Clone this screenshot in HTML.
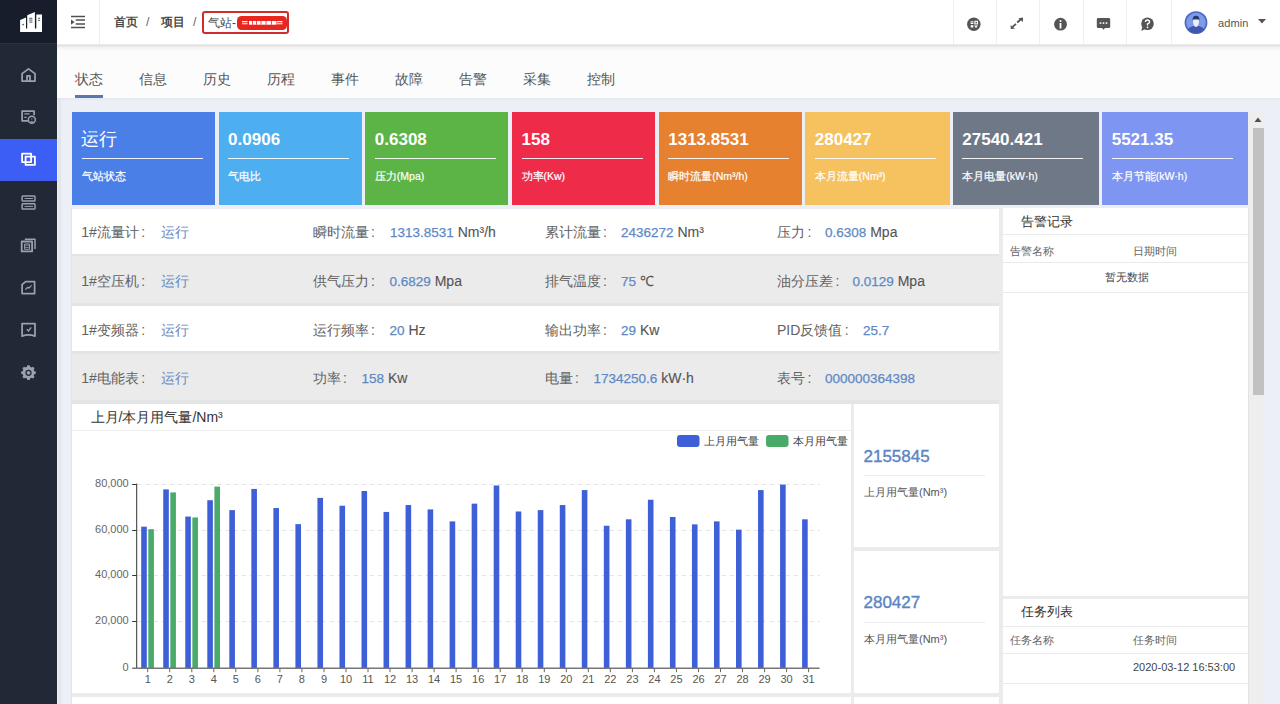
<!DOCTYPE html><html><head><meta charset='utf-8'><style>
*{box-sizing:border-box;margin:0;padding:0}
html,body{width:1280px;height:704px;overflow:hidden;background:#eceff5;font-family:'Liberation Sans',sans-serif;position:relative}
.a{position:absolute;white-space:nowrap}
</style></head><body><div class="a" style="left:0px;top:0px;width:57px;height:704px;background:#212936;"></div>
<div class="a" style="left:0px;top:0px;width:57px;height:43px;background:#171d2b;"></div>
<div class="a" style="left:0px;top:43px;width:57px;height:1px;background:#2b3342;"></div>
<div class="a" style="left:0px;top:138.5px;width:57px;height:42.5px;background:#3d5ef4;"></div>
<svg class="a" style="left:18px;top:10px" width="26" height="24" viewBox="0 0 26 24">
<path d="M2.1 10.1 L8 7.4 L8 22.1 L2.1 22.1 Z M9.2 5.3 L16.9 2.1 L16.9 22.1 L9.2 22.1 Z M18.3 4.4 L24 4.4 L24 22.1 L18.3 22.1 Z M2.1 18.5 L24 18.5 L24 22.1 L2.1 22.1 Z" fill="#fff"/>
<circle cx="5.1" cy="14.6" r="0.8" fill="#3a4150"/><path d="M11.2 8.3 L14.4 8.3 M11.2 10.1 L14.4 10.1 M11.2 12.1 L14.4 12.1" stroke="#3a4150" stroke-width="0.9"/><path d="M20.1 8.3 L22.1 8.3 M20.1 10.3 L22.1 10.3" stroke="#3a4150" stroke-width="0.9"/>
</svg>
<svg class="a" style="left:0;top:0" width="57" height="400" viewBox="0 0 57 400">
<g fill="none" stroke="#9ca1ac" stroke-width="1.75" stroke-linejoin="round">
<path d="M22.1 81 L22.1 73.6 L28.5 68.9 L35 73.6 L35 81 Z"/><path d="M27 81 L27 75.8 L30 75.8 L30 81"/>
<path d="M28.3 120.8 L22.1 120.8 L22.1 111 L34.1 111 L34.1 115.2"/>
<path d="M24.3 113.9 L29.6 113.9 M24.3 117.4 L26.6 117.4" stroke-width="1.4"/>
<circle cx="31.8" cy="119.8" r="3.5" stroke-width="1.5"/>
<path d="M31.8 118.6 L31.8 119.6 M30.3 121.9 L33.3 121.9" stroke-width="1.1"/>
<rect x="22.1" y="153.7" width="9" height="8.4" stroke="#fff" stroke-width="1.8"/>
<rect x="25.6" y="156.6" width="9.3" height="8.3" stroke="#fff" stroke-width="1.8"/>
<rect x="22.1" y="195.9" width="12.9" height="5.2" rx="0.8" stroke-width="1.5"/>
<rect x="22.1" y="203.8" width="12.9" height="5.2" rx="0.8" stroke-width="1.5"/>
<path d="M24.6 198.5 L33 198.5 M24.6 206.4 L33 206.4" stroke-width="1"/>
<path d="M24.8 239.2 L35 239.2 L35 249" stroke-width="1.5"/>
<rect x="21.7" y="241.5" width="10.4" height="9.9" stroke-width="1.8"/>
<rect x="24.6" y="244" width="5" height="5.3" stroke-width="1"/>
<path d="M24.6 245.7 L29.6 245.7 M24.6 247.5 L29.6 247.5" stroke-width="0.7"/>
<path d="M25.6 281.6 L34.6 281.6 L34.6 293.6 L22.1 293.6 L22.1 284.6 Z"/>
<path d="M25.3 289.6 L27.8 287.2 L29 288.2 L31.6 285.4" stroke-width="1.2"/>
<path d="M22.1 323.6 L35 323.6 L35 336.1 Q28.5 333.5 22.1 336.1 Z"/>
<path d="M26.8 329.2 L28.5 331 L31.2 327.4" stroke-width="1.3"/>
</g>
<g transform="translate(28.5 372.8)">
<path d="M-1.3 -7 L1.3 -7 L1.8 -5.2 L3.5 -4.4 L5.1 -5.4 L6.9 -3.6 L5.9 -2 L6.6 -0.3 L8.3 0.2 L8.3 2.6 L6.6 3.1 L5.9 4.8 L6.9 6.4 L5.1 8.2 L3.5 7.2 L1.8 8 L1.3 9.8 L-1.3 9.8 L-1.8 8 L-3.5 7.2 L-5.1 8.2 L-6.9 6.4 L-5.9 4.8 L-6.6 3.1 L-8.3 2.6 L-8.3 0.2 L-6.6 -0.3 L-5.9 -2 L-6.9 -3.6 L-5.1 -5.4 L-3.5 -4.4 L-1.8 -5.2 Z" transform="translate(0 -1.4) scale(0.88)" fill="#9ca1ac"/>
<circle cx="0" cy="0" r="2.5" fill="none" stroke="#212936" stroke-width="1.3"/>
</g>
</svg>
<div class="a" style="left:57px;top:0px;width:1223px;height:44px;background:#fff;"></div>
<div class="a" style="left:99px;top:0px;width:1px;height:44px;background:#eeeeee;"></div>
<svg class="a" style="left:70px;top:15px" width="16" height="14" viewBox="0 0 16 14">
<path d="M1 1.6 L15 1.6 M5.7 5.1 L15 5.1 M5.7 8.9 L15 8.9 M1 12.5 L15 12.5" stroke="#505050" stroke-width="1.5"/><path d="M1 4.5 L4.6 7.1 L1 9.7 Z" fill="#505050"/></svg>
<div class="a" style="left:114px;top:12px;font-size:12px;line-height:20px;color:#333;font-weight:normal;-webkit-text-stroke:0.3px #333">首页</div>
<div class="a" style="left:146px;top:12px;font-size:12.5px;line-height:20px;color:#666;font-weight:normal;">/</div>
<div class="a" style="left:161px;top:12px;font-size:12px;line-height:20px;color:#333;font-weight:normal;-webkit-text-stroke:0.3px #333">项目</div>
<div class="a" style="left:193px;top:12px;font-size:12.5px;line-height:20px;color:#666;font-weight:normal;">/</div>
<div class="a" style="left:202px;top:11px;width:87px;height:23px;background:transparent;border:2px solid #cf2c2c;border-radius:3px"></div>
<div class="a" style="left:208px;top:13px;font-size:12px;line-height:20px;color:#444;font-weight:normal;">气站-</div>
<div class="a" style="left:236.5px;top:16px;width:50.5px;height:14px;background:#e8261e;border-radius:4.5px"></div>
<svg class="a" style="left:236px;top:16px" width="51" height="14" viewBox="0 0 51 14"><path d="M6 5.6 L11.5 5.6 M6 7.8 L11.5 7.8 M41 5.6 L46.5 5.6 M41 7.8 L46.5 7.8" stroke="#fff" stroke-width="1.1"/><path d="M13 5 L40.5 5 L40.5 8.7 L13 8.7 Z" fill="#fff"/><path d="M16.5 5 L16.5 8.7 M20.5 5 L20.5 8.7 M25 5 L25 8.7 M30 5 L30 8.7 M35.5 5 L35.5 8.7" stroke="#e8261e" stroke-width="0.8"/></svg>
<div class="a" style="left:952.5px;top:0px;width:1px;height:44px;background:#efefef;"></div>
<div class="a" style="left:996px;top:0px;width:1px;height:44px;background:#efefef;"></div>
<div class="a" style="left:1039.2px;top:0px;width:1px;height:44px;background:#efefef;"></div>
<div class="a" style="left:1082.5px;top:0px;width:1px;height:44px;background:#efefef;"></div>
<div class="a" style="left:1126.2px;top:0px;width:1px;height:44px;background:#efefef;"></div>
<div class="a" style="left:1170.6px;top:0px;width:1px;height:44px;background:#efefef;"></div>
<svg class="a" style="left:966px;top:16px" width="16" height="16" viewBox="0 0 16 16"><circle cx="7.8" cy="8.3" r="6.7" fill="#555"/><path d="M4.6 5.9 L7.4 5.9 M4.6 7.5 L7.4 7.5" stroke="#fff" stroke-width="1.1"/><rect x="8.9" y="5.3" width="2.6" height="2.6" fill="none" stroke="#fff" stroke-width="1.1"/><rect x="4.7" y="9.2" width="2.6" height="2.3" fill="#fff"/><path d="M8.7 9.2 L10 11.2 L11.3 9.2" fill="none" stroke="#fff" stroke-width="1.1"/></svg>
<svg class="a" style="left:1004px;top:12px" width="26" height="24" viewBox="0 0 26 24"><path d="M13.2 10.5 L16.8 7.2 M8.6 14.9 L12 11.9" stroke="#555" stroke-width="1.9"/><path d="M14.5 6.2 L19 5.5 L18.9 10 Z M6.6 12.9 L6.8 17.1 L11 16.8 Z" fill="#555"/></svg>
<svg class="a" style="left:1053px;top:17px" width="15" height="15" viewBox="0 0 15 15"><circle cx="7.5" cy="7.2" r="6.4" fill="#555"/><circle cx="7.5" cy="4" r="1" fill="#fff"/><path d="M7.5 6 L7.5 11.5" stroke="#fff" stroke-width="1.8"/></svg>
<svg class="a" style="left:1096px;top:17px" width="15" height="15" viewBox="0 0 15 15"><path d="M2.2 1 L12.8 1 Q14.2 1 14.2 2.4 L14.2 9.8 Q14.2 11.1 12.8 11.1 L9 11.1 L7.5 12.8 L6 11.1 L2.2 11.1 Q0.8 11.1 0.8 9.8 L0.8 2.4 Q0.8 1 2.2 1 Z" fill="#555"/><rect x="3.7" y="5.3" width="1.6" height="1.6" fill="#fff"/><rect x="6.7" y="5.3" width="1.6" height="1.6" fill="#fff"/><rect x="9.7" y="5.3" width="1.6" height="1.6" fill="#fff"/></svg>
<svg class="a" style="left:1140px;top:17px" width="15" height="15" viewBox="0 0 15 15"><circle cx="7.5" cy="6.8" r="6.3" fill="#555"/><path d="M2 10 L1.5 14 L5 12 Z" fill="#555"/><path d="M5.5 5 Q5.5 3 7.5 3 Q9.5 3 9.5 5 Q9.5 6.3 7.5 7 L7.5 8.5" fill="none" stroke="#fff" stroke-width="1.4"/><circle cx="7.5" cy="10.3" r="0.9" fill="#fff"/></svg>
<svg class="a" style="left:1183.5px;top:10.5px" width="24" height="24" viewBox="0 0 24 24">
<circle cx="12" cy="11.6" r="11.4" fill="#4d67c2"/><circle cx="12" cy="11.6" r="9.8" fill="#7c9be8"/>
<path d="M3.5 18.5 Q6 15.5 9 15 L15 15 Q18 15.5 20.5 18.5 Q17 22 12 22 Q7 22 3.5 18.5 Z" fill="#3e57b0"/>
<path d="M9 9 Q9 16 12 16 Q15 16 15 9 Z" fill="#e9eefa"/><path d="M8.6 10 Q8.2 4.8 12 4.8 Q15.8 4.8 15.4 10 L14.8 8.2 Q12 7.2 9.2 8.2 Z" fill="#26376a"/></svg>
<div class="a" style="left:1218px;top:13px;font-size:11px;line-height:20px;color:#555;font-weight:normal;letter-spacing:0.1px">admin</div>
<svg class="a" style="left:1258px;top:19px" width="8" height="5" viewBox="0 0 8 5"><path d="M0 0 L8 0 L4 4.5 Z" fill="#555"/></svg>
<div class="a" style="left:57px;top:44px;width:1223px;height:54px;background:#fcfcfc;"></div>
<div class="a" style="left:57px;top:44px;width:1223px;height:7px;background:linear-gradient(#f2f2f2 0px,#e0e0e0 1.5px,#f0f0f0 3px,#f6f6f6 5px,#fcfcfc 7px);"></div>
<div class="a" style="left:74.5px;top:69px;font-size:14px;line-height:20px;color:#555;font-weight:normal;">状态</div>
<div class="a" style="left:138.5px;top:69px;font-size:14px;line-height:20px;color:#555;font-weight:normal;">信息</div>
<div class="a" style="left:202.5px;top:69px;font-size:14px;line-height:20px;color:#555;font-weight:normal;">历史</div>
<div class="a" style="left:266.5px;top:69px;font-size:14px;line-height:20px;color:#555;font-weight:normal;">历程</div>
<div class="a" style="left:330.5px;top:69px;font-size:14px;line-height:20px;color:#555;font-weight:normal;">事件</div>
<div class="a" style="left:394.5px;top:69px;font-size:14px;line-height:20px;color:#555;font-weight:normal;">故障</div>
<div class="a" style="left:458.5px;top:69px;font-size:14px;line-height:20px;color:#555;font-weight:normal;">告警</div>
<div class="a" style="left:522.5px;top:69px;font-size:14px;line-height:20px;color:#555;font-weight:normal;">采集</div>
<div class="a" style="left:586.5px;top:69px;font-size:14px;line-height:20px;color:#555;font-weight:normal;">控制</div>
<div class="a" style="left:75px;top:95px;width:28px;height:2.5px;background:#5877ad;"></div>
<div class="a" style="left:57px;top:98px;width:1223px;height:3px;background:linear-gradient(#e4e7ee,#eceff5);"></div>
<div class="a" style="left:58px;top:98px;width:3px;height:606px;background:#e2e5ec;"></div>
<div class="a" style="left:71px;top:208px;width:1px;height:496px;background:#e4e4e4;"></div>
<div class="a" style="left:72px;top:112px;width:143px;height:92.5px;background:#4a7fe8;"></div>
<div class="a" style="left:81px;top:127.5px;font-size:18px;line-height:22px;color:#fff;font-weight:normal;">运行</div>
<div class="a" style="left:81.5px;top:158px;width:121px;height:1.2px;background:rgba(255,255,255,.9);"></div>
<div class="a" style="left:81.5px;top:165.5px;font-size:10.5px;line-height:20px;color:#fff;font-weight:normal;-webkit-text-stroke:0.2px #fff">气站状态</div>
<div class="a" style="left:218.6px;top:112px;width:143.29999999999998px;height:92.5px;background:#4daff0;"></div>
<div class="a" style="left:228.1px;top:128.8px;font-size:17px;line-height:22px;color:#fff;font-weight:bold;">0.0906</div>
<div class="a" style="left:228.1px;top:158px;width:121px;height:1.2px;background:rgba(255,255,255,.9);"></div>
<div class="a" style="left:228.1px;top:165.5px;font-size:10.5px;line-height:20px;color:#fff;font-weight:normal;-webkit-text-stroke:0.2px #fff">气电比</div>
<div class="a" style="left:365.3px;top:112px;width:143.09999999999997px;height:92.5px;background:#5db446;"></div>
<div class="a" style="left:374.8px;top:128.8px;font-size:17px;line-height:22px;color:#fff;font-weight:bold;">0.6308</div>
<div class="a" style="left:374.8px;top:158px;width:121px;height:1.2px;background:rgba(255,255,255,.9);"></div>
<div class="a" style="left:374.8px;top:165.5px;font-size:10.5px;line-height:20px;color:#fff;font-weight:normal;-webkit-text-stroke:0.2px #fff">压力(Mpa)</div>
<div class="a" style="left:512px;top:112px;width:142.79999999999995px;height:92.5px;background:#ee2c4a;"></div>
<div class="a" style="left:521.5px;top:128.8px;font-size:17px;line-height:22px;color:#fff;font-weight:bold;">158</div>
<div class="a" style="left:521.5px;top:158px;width:121px;height:1.2px;background:rgba(255,255,255,.9);"></div>
<div class="a" style="left:521.5px;top:165.5px;font-size:10.5px;line-height:20px;color:#fff;font-weight:normal;-webkit-text-stroke:0.2px #fff">功率(Kw)</div>
<div class="a" style="left:658.75px;top:112px;width:142.95000000000005px;height:92.5px;background:#e5812f;"></div>
<div class="a" style="left:668.25px;top:128.8px;font-size:17px;line-height:22px;color:#fff;font-weight:bold;">1313.8531</div>
<div class="a" style="left:668.25px;top:158px;width:121px;height:1.2px;background:rgba(255,255,255,.9);"></div>
<div class="a" style="left:668.25px;top:165.5px;font-size:10.5px;line-height:20px;color:#fff;font-weight:normal;-webkit-text-stroke:0.2px #fff">瞬时流量(Nm³/h)</div>
<div class="a" style="left:805.3px;top:112px;width:144.4000000000001px;height:92.5px;background:#f6c15f;"></div>
<div class="a" style="left:814.8px;top:128.8px;font-size:17px;line-height:22px;color:#fff;font-weight:bold;">280427</div>
<div class="a" style="left:814.8px;top:158px;width:121px;height:1.2px;background:rgba(255,255,255,.9);"></div>
<div class="a" style="left:814.8px;top:165.5px;font-size:10.5px;line-height:20px;color:#fff;font-weight:normal;-webkit-text-stroke:0.2px #fff">本月流量(Nm³)</div>
<div class="a" style="left:952.8px;top:112px;width:146.20000000000005px;height:92.5px;background:#6f7886;"></div>
<div class="a" style="left:962.3px;top:128.8px;font-size:17px;line-height:22px;color:#fff;font-weight:bold;">27540.421</div>
<div class="a" style="left:962.3px;top:158px;width:121px;height:1.2px;background:rgba(255,255,255,.9);"></div>
<div class="a" style="left:962.3px;top:165.5px;font-size:10.5px;line-height:20px;color:#fff;font-weight:normal;-webkit-text-stroke:0.2px #fff">本月电量(kW·h)</div>
<div class="a" style="left:1102.2px;top:112px;width:145.79999999999995px;height:92.5px;background:#7e96f1;"></div>
<div class="a" style="left:1111.7px;top:128.8px;font-size:17px;line-height:22px;color:#fff;font-weight:bold;">5521.35</div>
<div class="a" style="left:1111.7px;top:158px;width:121px;height:1.2px;background:rgba(255,255,255,.9);"></div>
<div class="a" style="left:1111.7px;top:165.5px;font-size:10.5px;line-height:20px;color:#fff;font-weight:normal;-webkit-text-stroke:0.2px #fff">本月节能(kW·h)</div>
<div class="a" style="left:72px;top:208.5px;width:927px;height:195.5px;background:#e3e4e6;"></div>
<div class="a" style="left:72px;top:208.5px;width:927px;height:45.5px;background:#fff;"></div>
<div class="a" style="left:81.25px;top:222px;font-size:14px;line-height:20px;color:#626262;font-weight:normal;">1#流量计<span style="margin-left:2.5px">:</span></div>
<div class="a" style="left:161px;top:222px;font-size:14px;line-height:20px;color:#6089c3;font-weight:normal;">运行</div>
<div class="a" style="left:312.5px;top:222px;font-size:14px;line-height:20px;color:#626262;font-weight:normal;">瞬时流量<span style="margin-left:2.5px">:</span></div>
<div class="a" style="left:390px;top:222px;font-size:14px;line-height:20px;color:#444;font-weight:normal;"><span style="color:#6089c3;font-size:13.5px;-webkit-text-stroke:0.25px #6089c3">1313.8531</span> <span style="color:#555;-webkit-text-stroke:0.12px #555">Nm³/h</span></div>
<div class="a" style="left:544.5px;top:222px;font-size:14px;line-height:20px;color:#626262;font-weight:normal;">累计流量<span style="margin-left:2.5px">:</span></div>
<div class="a" style="left:621px;top:222px;font-size:14px;line-height:20px;color:#444;font-weight:normal;"><span style="color:#6089c3;font-size:13.5px;-webkit-text-stroke:0.25px #6089c3">2436272</span> <span style="color:#555;-webkit-text-stroke:0.12px #555">Nm³</span></div>
<div class="a" style="left:777px;top:222px;font-size:14px;line-height:20px;color:#626262;font-weight:normal;">压力<span style="margin-left:2.5px">:</span></div>
<div class="a" style="left:825px;top:222px;font-size:14px;line-height:20px;color:#444;font-weight:normal;"><span style="color:#6089c3;font-size:13.5px;-webkit-text-stroke:0.25px #6089c3">0.6308</span> <span style="color:#555;-webkit-text-stroke:0.12px #555">Mpa</span></div>
<div class="a" style="left:72px;top:256px;width:927px;height:46.5px;background:#ebebeb;"></div>
<div class="a" style="left:81.25px;top:270.8px;font-size:14px;line-height:20px;color:#626262;font-weight:normal;">1#空压机<span style="margin-left:2.5px">:</span></div>
<div class="a" style="left:161px;top:270.8px;font-size:14px;line-height:20px;color:#6089c3;font-weight:normal;">运行</div>
<div class="a" style="left:312.5px;top:270.8px;font-size:14px;line-height:20px;color:#626262;font-weight:normal;">供气压力<span style="margin-left:2.5px">:</span></div>
<div class="a" style="left:389.5px;top:270.8px;font-size:14px;line-height:20px;color:#444;font-weight:normal;"><span style="color:#6089c3;font-size:13.5px;-webkit-text-stroke:0.25px #6089c3">0.6829</span> <span style="color:#555;-webkit-text-stroke:0.12px #555">Mpa</span></div>
<div class="a" style="left:544.5px;top:270.8px;font-size:14px;line-height:20px;color:#626262;font-weight:normal;">排气温度<span style="margin-left:2.5px">:</span></div>
<div class="a" style="left:621px;top:270.8px;font-size:14px;line-height:20px;color:#444;font-weight:normal;"><span style="color:#6089c3;font-size:13.5px;-webkit-text-stroke:0.25px #6089c3">75</span> <span style="color:#555;-webkit-text-stroke:0.12px #555">℃</span></div>
<div class="a" style="left:777px;top:270.8px;font-size:14px;line-height:20px;color:#626262;font-weight:normal;">油分压差<span style="margin-left:2.5px">:</span></div>
<div class="a" style="left:852.5px;top:270.8px;font-size:14px;line-height:20px;color:#444;font-weight:normal;"><span style="color:#6089c3;font-size:13.5px;-webkit-text-stroke:0.25px #6089c3">0.0129</span> <span style="color:#555;-webkit-text-stroke:0.12px #555">Mpa</span></div>
<div class="a" style="left:72px;top:305.5px;width:927px;height:45px;background:#fff;"></div>
<div class="a" style="left:81.25px;top:320px;font-size:14px;line-height:20px;color:#626262;font-weight:normal;">1#变频器<span style="margin-left:2.5px">:</span></div>
<div class="a" style="left:161px;top:320px;font-size:14px;line-height:20px;color:#6089c3;font-weight:normal;">运行</div>
<div class="a" style="left:312.5px;top:320px;font-size:14px;line-height:20px;color:#626262;font-weight:normal;">运行频率<span style="margin-left:2.5px">:</span></div>
<div class="a" style="left:389.5px;top:320px;font-size:14px;line-height:20px;color:#444;font-weight:normal;"><span style="color:#6089c3;font-size:13.5px;-webkit-text-stroke:0.25px #6089c3">20</span> <span style="color:#555;-webkit-text-stroke:0.12px #555">Hz</span></div>
<div class="a" style="left:544.5px;top:320px;font-size:14px;line-height:20px;color:#626262;font-weight:normal;">输出功率<span style="margin-left:2.5px">:</span></div>
<div class="a" style="left:621px;top:320px;font-size:14px;line-height:20px;color:#444;font-weight:normal;"><span style="color:#6089c3;font-size:13.5px;-webkit-text-stroke:0.25px #6089c3">29</span> <span style="color:#555;-webkit-text-stroke:0.12px #555">Kw</span></div>
<div class="a" style="left:777px;top:320px;font-size:14px;line-height:20px;color:#626262;font-weight:normal;">PID反馈值<span style="margin-left:2.5px">:</span></div>
<div class="a" style="left:863px;top:320px;font-size:14px;line-height:20px;color:#444;font-weight:normal;"><span style="color:#6089c3;font-size:13.5px;-webkit-text-stroke:0.25px #6089c3">25.7</span> <span style="color:#555;-webkit-text-stroke:0.12px #555"></span></div>
<div class="a" style="left:72px;top:353.5px;width:927px;height:46.5px;background:#ebebeb;"></div>
<div class="a" style="left:81.25px;top:368.3px;font-size:14px;line-height:20px;color:#626262;font-weight:normal;">1#电能表<span style="margin-left:2.5px">:</span></div>
<div class="a" style="left:161px;top:368.3px;font-size:14px;line-height:20px;color:#6089c3;font-weight:normal;">运行</div>
<div class="a" style="left:312.5px;top:368.3px;font-size:14px;line-height:20px;color:#626262;font-weight:normal;">功率<span style="margin-left:2.5px">:</span></div>
<div class="a" style="left:361.5px;top:368.3px;font-size:14px;line-height:20px;color:#444;font-weight:normal;"><span style="color:#6089c3;font-size:13.5px;-webkit-text-stroke:0.25px #6089c3">158</span> <span style="color:#555;-webkit-text-stroke:0.12px #555">Kw</span></div>
<div class="a" style="left:544.5px;top:368.3px;font-size:14px;line-height:20px;color:#626262;font-weight:normal;">电量<span style="margin-left:2.5px">:</span></div>
<div class="a" style="left:593.5px;top:368.3px;font-size:14px;line-height:20px;color:#444;font-weight:normal;"><span style="color:#6089c3;font-size:13.5px;-webkit-text-stroke:0.25px #6089c3">1734250.6</span> <span style="color:#555;-webkit-text-stroke:0.12px #555">kW·h</span></div>
<div class="a" style="left:777px;top:368.3px;font-size:14px;line-height:20px;color:#626262;font-weight:normal;">表号<span style="margin-left:2.5px">:</span></div>
<div class="a" style="left:825px;top:368.3px;font-size:14px;line-height:20px;color:#444;font-weight:normal;"><span style="color:#6089c3;font-size:13.5px;-webkit-text-stroke:0.25px #6089c3">000000364398</span> <span style="color:#555;-webkit-text-stroke:0.12px #555"></span></div>
<div class="a" style="left:72px;top:404px;width:779px;height:288.5px;background:#fff;"></div>
<div class="a" style="left:90.5px;top:407px;font-size:14px;line-height:20px;color:#333;font-weight:normal;">上月/本月用气量/Nm³</div>
<div class="a" style="left:72px;top:429.5px;width:779px;height:1px;background:#eeeeee;"></div>
<svg class="a" style="left:0;top:0" width="1280" height="704"><path d="M137.7 621.5 L819.6 621.5" stroke="#e3e3e3" stroke-width="1" stroke-dasharray="4 4"/><path d="M137.7 575.5 L819.6 575.5" stroke="#e3e3e3" stroke-width="1" stroke-dasharray="4 4"/><path d="M137.7 530.5 L819.6 530.5" stroke="#e3e3e3" stroke-width="1" stroke-dasharray="4 4"/><path d="M137.7 484.5 L819.6 484.5" stroke="#e3e3e3" stroke-width="1" stroke-dasharray="4 4"/><rect x="141.20" y="526.67" width="5.6" height="141.53" fill="#3f5fd8"/><rect x="163.23" y="489.39" width="5.6" height="178.81" fill="#3f5fd8"/><rect x="185.26" y="516.55" width="5.6" height="151.65" fill="#3f5fd8"/><rect x="207.29" y="500.21" width="5.6" height="167.99" fill="#3f5fd8"/><rect x="229.32" y="510.10" width="5.6" height="158.10" fill="#3f5fd8"/><rect x="251.35" y="488.93" width="5.6" height="179.27" fill="#3f5fd8"/><rect x="273.38" y="508.03" width="5.6" height="160.17" fill="#3f5fd8"/><rect x="295.41" y="524.14" width="5.6" height="144.06" fill="#3f5fd8"/><rect x="317.44" y="497.91" width="5.6" height="170.29" fill="#3f5fd8"/><rect x="339.47" y="505.73" width="5.6" height="162.47" fill="#3f5fd8"/><rect x="361.50" y="491.00" width="5.6" height="177.20" fill="#3f5fd8"/><rect x="383.53" y="511.95" width="5.6" height="156.25" fill="#3f5fd8"/><rect x="405.56" y="505.04" width="5.6" height="163.16" fill="#3f5fd8"/><rect x="427.59" y="509.41" width="5.6" height="158.79" fill="#3f5fd8"/><rect x="449.62" y="521.38" width="5.6" height="146.82" fill="#3f5fd8"/><rect x="471.65" y="503.66" width="5.6" height="164.54" fill="#3f5fd8"/><rect x="493.68" y="485.48" width="5.6" height="182.72" fill="#3f5fd8"/><rect x="515.71" y="511.48" width="5.6" height="156.72" fill="#3f5fd8"/><rect x="537.74" y="510.10" width="5.6" height="158.10" fill="#3f5fd8"/><rect x="559.77" y="505.04" width="5.6" height="163.16" fill="#3f5fd8"/><rect x="581.80" y="490.08" width="5.6" height="178.12" fill="#3f5fd8"/><rect x="603.83" y="525.75" width="5.6" height="142.45" fill="#3f5fd8"/><rect x="625.86" y="519.31" width="5.6" height="148.89" fill="#3f5fd8"/><rect x="647.89" y="499.75" width="5.6" height="168.45" fill="#3f5fd8"/><rect x="669.92" y="517.01" width="5.6" height="151.19" fill="#3f5fd8"/><rect x="691.95" y="524.37" width="5.6" height="143.83" fill="#3f5fd8"/><rect x="713.98" y="521.38" width="5.6" height="146.82" fill="#3f5fd8"/><rect x="736.01" y="529.66" width="5.6" height="138.54" fill="#3f5fd8"/><rect x="758.04" y="490.08" width="5.6" height="178.12" fill="#3f5fd8"/><rect x="780.07" y="484.56" width="5.6" height="183.64" fill="#3f5fd8"/><rect x="802.10" y="519.31" width="5.6" height="148.89" fill="#3f5fd8"/><rect x="148.30" y="529.20" width="5.6" height="139.00" fill="#4aaa6a"/><rect x="170.33" y="492.38" width="5.6" height="175.82" fill="#4aaa6a"/><rect x="192.36" y="517.47" width="5.6" height="150.73" fill="#4aaa6a"/><rect x="214.39" y="486.63" width="5.6" height="181.57" fill="#4aaa6a"/><path d="M136.7 483.6 L136.7 668.2" stroke="#333" stroke-width="1"/><path d="M132.2 668.2 L136.7 668.2" stroke="#333" stroke-width="1"/><text x="128.7" y="670.6" text-anchor="end" font-size="11" fill="#666" font-family="Liberation Sans">0</text><path d="M132.2 621.5 L136.7 621.5" stroke="#333" stroke-width="1"/><text x="128.7" y="623.9" text-anchor="end" font-size="11" fill="#666" font-family="Liberation Sans">20,000</text><path d="M132.2 575.5 L136.7 575.5" stroke="#333" stroke-width="1"/><text x="128.7" y="577.9" text-anchor="end" font-size="11" fill="#666" font-family="Liberation Sans">40,000</text><path d="M132.2 530.5 L136.7 530.5" stroke="#333" stroke-width="1"/><text x="128.7" y="532.9" text-anchor="end" font-size="11" fill="#666" font-family="Liberation Sans">60,000</text><path d="M132.2 484.5 L136.7 484.5" stroke="#333" stroke-width="1"/><text x="128.7" y="486.9" text-anchor="end" font-size="11" fill="#666" font-family="Liberation Sans">80,000</text><path d="M136.7 668.2 L819.6 668.2" stroke="#777" stroke-width="1.5"/><path d="M147.7 668.2 L147.7 672.2" stroke="#666" stroke-width="1"/><text x="147.7" y="683.2" text-anchor="middle" font-size="11" fill="#555" font-family="Liberation Sans">1</text><path d="M169.7 668.2 L169.7 672.2" stroke="#666" stroke-width="1"/><text x="169.7" y="683.2" text-anchor="middle" font-size="11" fill="#555" font-family="Liberation Sans">2</text><path d="M191.8 668.2 L191.8 672.2" stroke="#666" stroke-width="1"/><text x="191.8" y="683.2" text-anchor="middle" font-size="11" fill="#555" font-family="Liberation Sans">3</text><path d="M213.8 668.2 L213.8 672.2" stroke="#666" stroke-width="1"/><text x="213.8" y="683.2" text-anchor="middle" font-size="11" fill="#555" font-family="Liberation Sans">4</text><path d="M235.8 668.2 L235.8 672.2" stroke="#666" stroke-width="1"/><text x="235.8" y="683.2" text-anchor="middle" font-size="11" fill="#555" font-family="Liberation Sans">5</text><path d="M257.9 668.2 L257.9 672.2" stroke="#666" stroke-width="1"/><text x="257.9" y="683.2" text-anchor="middle" font-size="11" fill="#555" font-family="Liberation Sans">6</text><path d="M279.9 668.2 L279.9 672.2" stroke="#666" stroke-width="1"/><text x="279.9" y="683.2" text-anchor="middle" font-size="11" fill="#555" font-family="Liberation Sans">7</text><path d="M301.9 668.2 L301.9 672.2" stroke="#666" stroke-width="1"/><text x="301.9" y="683.2" text-anchor="middle" font-size="11" fill="#555" font-family="Liberation Sans">8</text><path d="M324.0 668.2 L324.0 672.2" stroke="#666" stroke-width="1"/><text x="324.0" y="683.2" text-anchor="middle" font-size="11" fill="#555" font-family="Liberation Sans">9</text><path d="M346.0 668.2 L346.0 672.2" stroke="#666" stroke-width="1"/><text x="346.0" y="683.2" text-anchor="middle" font-size="11" fill="#555" font-family="Liberation Sans">10</text><path d="M368.0 668.2 L368.0 672.2" stroke="#666" stroke-width="1"/><text x="368.0" y="683.2" text-anchor="middle" font-size="11" fill="#555" font-family="Liberation Sans">11</text><path d="M390.0 668.2 L390.0 672.2" stroke="#666" stroke-width="1"/><text x="390.0" y="683.2" text-anchor="middle" font-size="11" fill="#555" font-family="Liberation Sans">12</text><path d="M412.1 668.2 L412.1 672.2" stroke="#666" stroke-width="1"/><text x="412.1" y="683.2" text-anchor="middle" font-size="11" fill="#555" font-family="Liberation Sans">13</text><path d="M434.1 668.2 L434.1 672.2" stroke="#666" stroke-width="1"/><text x="434.1" y="683.2" text-anchor="middle" font-size="11" fill="#555" font-family="Liberation Sans">14</text><path d="M456.1 668.2 L456.1 672.2" stroke="#666" stroke-width="1"/><text x="456.1" y="683.2" text-anchor="middle" font-size="11" fill="#555" font-family="Liberation Sans">15</text><path d="M478.2 668.2 L478.2 672.2" stroke="#666" stroke-width="1"/><text x="478.2" y="683.2" text-anchor="middle" font-size="11" fill="#555" font-family="Liberation Sans">16</text><path d="M500.2 668.2 L500.2 672.2" stroke="#666" stroke-width="1"/><text x="500.2" y="683.2" text-anchor="middle" font-size="11" fill="#555" font-family="Liberation Sans">17</text><path d="M522.2 668.2 L522.2 672.2" stroke="#666" stroke-width="1"/><text x="522.2" y="683.2" text-anchor="middle" font-size="11" fill="#555" font-family="Liberation Sans">18</text><path d="M544.3 668.2 L544.3 672.2" stroke="#666" stroke-width="1"/><text x="544.3" y="683.2" text-anchor="middle" font-size="11" fill="#555" font-family="Liberation Sans">19</text><path d="M566.3 668.2 L566.3 672.2" stroke="#666" stroke-width="1"/><text x="566.3" y="683.2" text-anchor="middle" font-size="11" fill="#555" font-family="Liberation Sans">20</text><path d="M588.3 668.2 L588.3 672.2" stroke="#666" stroke-width="1"/><text x="588.3" y="683.2" text-anchor="middle" font-size="11" fill="#555" font-family="Liberation Sans">21</text><path d="M610.3 668.2 L610.3 672.2" stroke="#666" stroke-width="1"/><text x="610.3" y="683.2" text-anchor="middle" font-size="11" fill="#555" font-family="Liberation Sans">22</text><path d="M632.4 668.2 L632.4 672.2" stroke="#666" stroke-width="1"/><text x="632.4" y="683.2" text-anchor="middle" font-size="11" fill="#555" font-family="Liberation Sans">23</text><path d="M654.4 668.2 L654.4 672.2" stroke="#666" stroke-width="1"/><text x="654.4" y="683.2" text-anchor="middle" font-size="11" fill="#555" font-family="Liberation Sans">24</text><path d="M676.4 668.2 L676.4 672.2" stroke="#666" stroke-width="1"/><text x="676.4" y="683.2" text-anchor="middle" font-size="11" fill="#555" font-family="Liberation Sans">25</text><path d="M698.5 668.2 L698.5 672.2" stroke="#666" stroke-width="1"/><text x="698.5" y="683.2" text-anchor="middle" font-size="11" fill="#555" font-family="Liberation Sans">26</text><path d="M720.5 668.2 L720.5 672.2" stroke="#666" stroke-width="1"/><text x="720.5" y="683.2" text-anchor="middle" font-size="11" fill="#555" font-family="Liberation Sans">27</text><path d="M742.5 668.2 L742.5 672.2" stroke="#666" stroke-width="1"/><text x="742.5" y="683.2" text-anchor="middle" font-size="11" fill="#555" font-family="Liberation Sans">28</text><path d="M764.6 668.2 L764.6 672.2" stroke="#666" stroke-width="1"/><text x="764.6" y="683.2" text-anchor="middle" font-size="11" fill="#555" font-family="Liberation Sans">29</text><path d="M786.6 668.2 L786.6 672.2" stroke="#666" stroke-width="1"/><text x="786.6" y="683.2" text-anchor="middle" font-size="11" fill="#555" font-family="Liberation Sans">30</text><path d="M808.6 668.2 L808.6 672.2" stroke="#666" stroke-width="1"/><text x="808.6" y="683.2" text-anchor="middle" font-size="11" fill="#555" font-family="Liberation Sans">31</text><rect x="677" y="435" width="22.5" height="12" rx="3" fill="#3f5fd8"/><rect x="766" y="435" width="22.5" height="12" rx="3" fill="#4aaa6a"/></svg>
<div class="a" style="left:704px;top:431px;font-size:11px;line-height:20px;color:#444;font-weight:normal;">上月用气量</div>
<div class="a" style="left:793px;top:431px;font-size:11px;line-height:20px;color:#444;font-weight:normal;">本月用气量</div>
<div class="a" style="left:72px;top:692.5px;width:779px;height:4px;background:#ebebeb;"></div>
<div class="a" style="left:72px;top:696.5px;width:779px;height:8px;background:#fff;"></div>
<div class="a" style="left:851px;top:404px;width:152px;height:300px;background:#ebebeb;"></div>
<div class="a" style="left:854px;top:403.5px;width:145.5px;height:143.5px;background:#fff;"></div>
<div class="a" style="left:854px;top:551px;width:145.5px;height:142px;background:#fff;"></div>
<div class="a" style="left:854px;top:697px;width:145.5px;height:7px;background:#fff;"></div>
<div class="a" style="left:863.5px;top:446px;font-size:17px;line-height:22px;color:#5b85c5;font-weight:normal;letter-spacing:0px;-webkit-text-stroke:0.4px #5b85c5">2155845</div>
<div class="a" style="left:864px;top:475px;width:121px;height:1px;background:#ececec;"></div>
<div class="a" style="left:864px;top:482px;font-size:11px;line-height:20px;color:#555;font-weight:normal;">上月用气量(Nm³)</div>
<div class="a" style="left:863.5px;top:592px;font-size:17px;line-height:22px;color:#5b85c5;font-weight:normal;letter-spacing:0px;-webkit-text-stroke:0.4px #5b85c5">280427</div>
<div class="a" style="left:864px;top:622px;width:121px;height:1px;background:#ececec;"></div>
<div class="a" style="left:864px;top:629px;font-size:11px;line-height:20px;color:#555;font-weight:normal;">本月用气量(Nm³)</div>
<div class="a" style="left:999px;top:208px;width:4px;height:496px;background:#ebebeb;"></div>
<div class="a" style="left:1003px;top:208px;width:245px;height:388px;background:#fff;"></div>
<div class="a" style="left:1021px;top:212px;font-size:13px;line-height:20px;color:#333;font-weight:normal;">告警记录</div>
<div class="a" style="left:1003px;top:234px;width:245px;height:1px;background:#eaeaea;"></div>
<div class="a" style="left:1010px;top:240.5px;font-size:10.5px;line-height:20px;color:#666;font-weight:normal;">告警名称</div>
<div class="a" style="left:1133px;top:240.5px;font-size:10.5px;line-height:20px;color:#666;font-weight:normal;">日期时间</div>
<div class="a" style="left:1003px;top:262px;width:245px;height:1px;background:#eaeaea;"></div>
<div class="a" style="left:1104.5px;top:267px;font-size:11px;line-height:20px;color:#444;font-weight:normal;">暂无数据</div>
<div class="a" style="left:1003px;top:292px;width:245px;height:1px;background:#eaeaea;"></div>
<div class="a" style="left:1003px;top:596px;width:245px;height:3px;background:#ebebeb;"></div>
<div class="a" style="left:1003px;top:599px;width:245px;height:105px;background:#fff;"></div>
<div class="a" style="left:1020.5px;top:602px;font-size:13px;line-height:20px;color:#333;font-weight:normal;">任务列表</div>
<div class="a" style="left:1003px;top:625.5px;width:245px;height:1px;background:#eaeaea;"></div>
<div class="a" style="left:1010px;top:630px;font-size:10.5px;line-height:20px;color:#666;font-weight:normal;">任务名称</div>
<div class="a" style="left:1133px;top:630px;font-size:10.5px;line-height:20px;color:#666;font-weight:normal;">任务时间</div>
<div class="a" style="left:1003px;top:653px;width:245px;height:1px;background:#eaeaea;"></div>
<div class="a" style="left:1133px;top:657px;font-size:11px;line-height:20px;color:#444;font-weight:normal;">2020-03-12 16:53:00</div>
<div class="a" style="left:1003px;top:683px;width:245px;height:1px;background:#eaeaea;"></div>
<div class="a" style="left:1248px;top:112px;width:16px;height:592px;background:#efeeef;"></div>
<div class="a" style="left:1248px;top:208px;width:1px;height:496px;background:#e3e3e3;"></div>
<svg class="a" style="left:1254px;top:117px" width="8" height="6" viewBox="0 0 8 6"><path d="M0.5 5 L7.5 5 L4 0.5 Z" fill="#505050"/></svg>
<div class="a" style="left:1252.5px;top:128px;width:11.5px;height:267px;background:#c1c1c1;"></div></body></html>
